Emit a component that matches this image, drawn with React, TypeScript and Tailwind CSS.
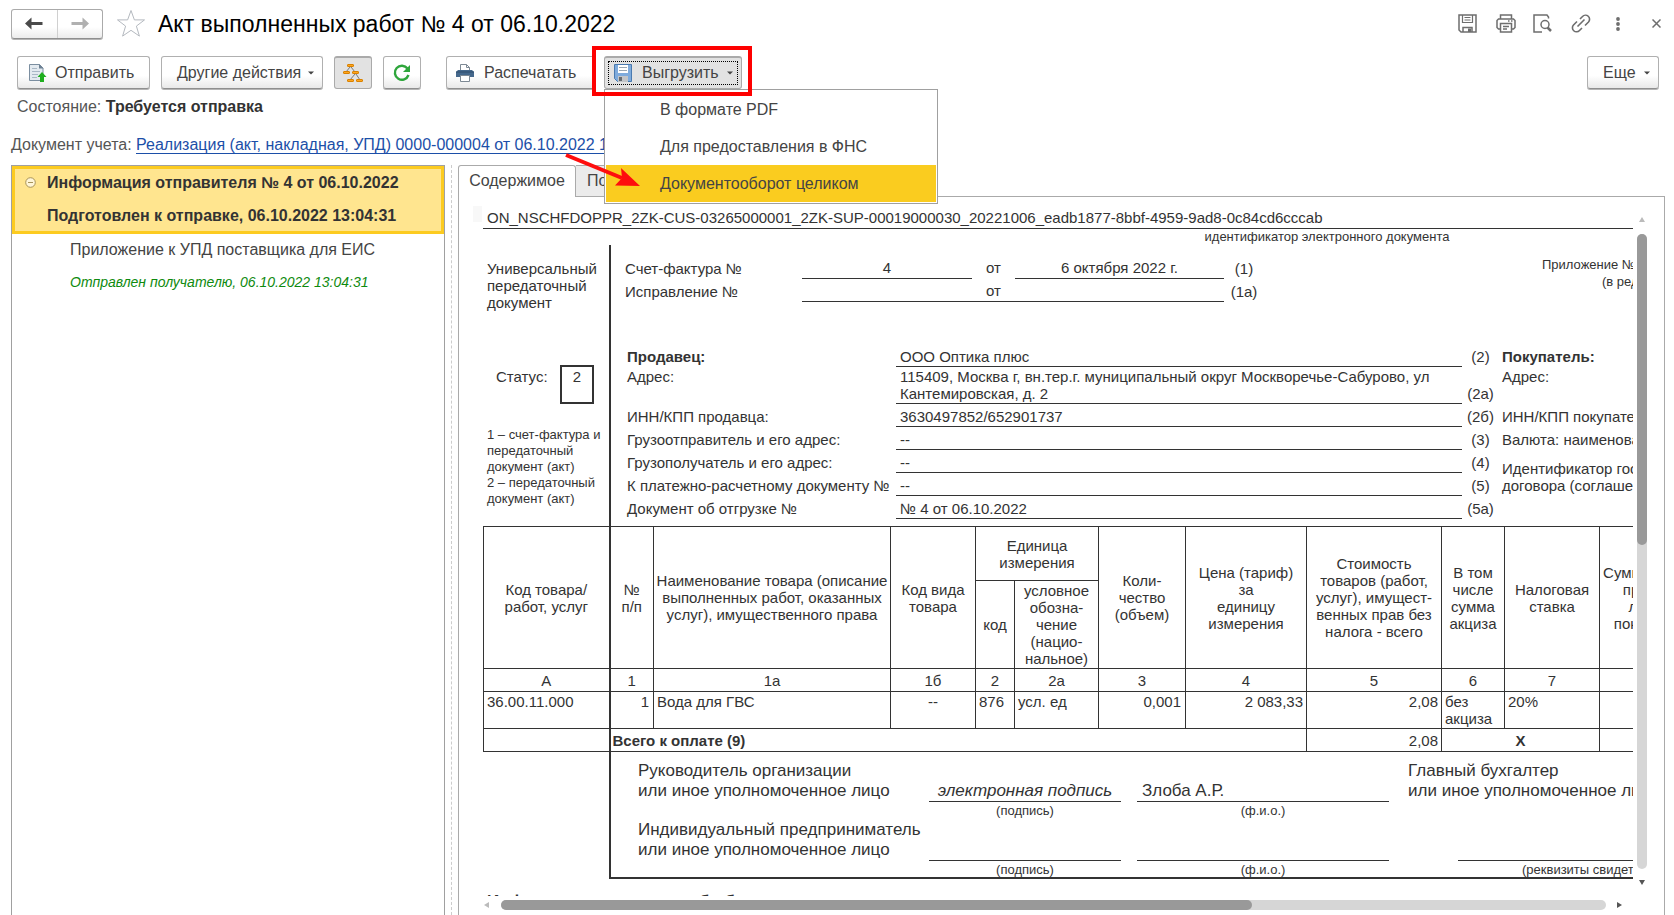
import { useState } from 'react';

const frame = 'border-[#333]';

const printRows = [
  { label: 'ИНН/КПП продавца:', value: '3630497852/652901737', num: '(2б)', buyer: 'ИНН/КПП покупателя:' },
  { label: 'Грузоотправитель и его адрес:', value: '--', num: '(3)', buyer: 'Валюта: наименование, код' },
];

const tailRows = [
  { label: 'Грузополучатель и его адрес:', value: '--', num: '(4)' },
  { label: 'К платежно-расчетному документу №', value: '--', num: '(5)' },
  { label: 'Документ об отгрузке №', value: '№ 4 от 06.10.2022', num: '(5а)' },
];

const columns = [126, 44, 237, 85, 39, 84, 87, 121, 135, 63, 95, 110];

const buttonBase =
  'flex h-[33px] shrink-0 items-center rounded-[3px] border border-[#b0b0b0] border-b-[#8f8f8f] bg-linear-to-b from-white from-60% to-[#e9e9e9] text-[16px] text-[#444] shadow-[0_1px_0_#b5b5b5]';

function Caret() {
  return (
    <svg width="6" height="4" viewBox="0 0 6 4" aria-hidden="true">
      <path d="M0 0.5h6L3 3.5z" fill="#444" />
    </svg>
  );
}

function SendIcon() {
  return (
    <svg width="19" height="20" viewBox="0 0 19 20" aria-hidden="true">
      <path d="M1.5 1.5h10l3.5 3.5v12.500H1.500z" fill="#e3eaf0" stroke="#7b8ea0" />
      <path d="M11 1l4.500 4.500H11z" fill="#6c8093" />
      <path d="M4 5.500h5M4 8.500h8M4 11.500h6M4 14.500h5" stroke="#a9b8c6" />
      <path d="M14 9l4.500 5H16v5h-4v-5H9.500z" fill="#1fae1f" />
    </svg>
  );
}

function TreeIcon() {
  return (
    <svg width="20" height="19" viewBox="0 0 20 19" aria-hidden="true">
      <path d="M7 3L3 8M8 3l4 5M12 10l-5 6M13 10l4 6" stroke="#7a7a7a" fill="none" />
      <g fill="#ffa51f" stroke="#d98200">
        <rect x="4.500" y="0.500" width="6" height="2" rx="0.500" />
        <rect x="0.500" y="7.500" width="6" height="2" rx="0.500" />
        <rect x="9.500" y="7.500" width="6" height="2" rx="0.500" />
        <rect x="4.500" y="15.500" width="6" height="2" rx="0.500" />
        <rect x="13.500" y="15.500" width="6" height="2" rx="0.500" />
      </g>
    </svg>
  );
}

function RefreshIcon() {
  return (
    <svg width="18" height="18" viewBox="0 0 18 18" aria-hidden="true">
      <path d="M14.500 4.500A7 7 0 1 0 15.500 11" fill="none" stroke="#2fa63c" strokeWidth="2.400" />
      <path d="M17 1v7h-7z" fill="#2fa63c" />
    </svg>
  );
}

function PrinterIcon() {
  return (
    <svg width="18" height="18" viewBox="0 0 18 18" aria-hidden="true">
      <path d="M4.500 7V0.500h6l3 3V7" fill="#fff" stroke="#7d8994" />
      <path d="M10.500 0.500v3h3" fill="none" stroke="#7d8994" />
      <path d="M2 6h14l2 2v5H0V8z" fill="#45688c" />
      <path d="M0 8h18" stroke="#2e4d6d" />
      <path d="M4.500 11.500h9v6h-9z" fill="#fff" stroke="#7d8994" />
    </svg>
  );
}

function DisketteIcon() {
  return (
    <svg width="18" height="18" viewBox="0 0 18 18" aria-hidden="true">
      <path d="M0.500 0.500h17v17h-14l-3-3z" fill="#7fabdc" stroke="#4a7ab0" />
      <path d="M4 1h10v8H4z" fill="#fff" />
      <path d="M5 3.500h8M5 6.500h8" stroke="#9aa7b3" />
      <path d="M4 12h10v6H4z" fill="#c3c5c8" />
      <path d="M5 13h3v4H5z" fill="#666c72" />
    </svg>
  );
}

function WindowIcons() {
  return (
    <div className="flex items-center text-[#6e6e6e]">
      <button type="button" aria-label="Сохранить" className="mr-[19px]">
        <svg width="19" height="19" viewBox="0 0 19 19" fill="none" stroke="currentColor" strokeWidth="1.500">
          <path d="M1 1h17v17H3l-2-2z" />
          <path d="M4.500 1v7.500h10V1M6.500 3.500h6M6.500 6h6" strokeWidth="1.200" />
          <path d="M5 18v-4.500h9V18" />
          <path d="M10 14.500h3V18h-3z" fill="currentColor" stroke="none" />
        </svg>
      </button>
      <button type="button" aria-label="Печать" className="mr-[17px]">
        <svg width="20" height="19" viewBox="0 0 20 19" fill="none" stroke="currentColor" strokeWidth="1.500">
          <path d="M4.500 5V1h11v4" />
          <path d="M4.500 15H2.500l-1.500-1.500v-7L2.500 5h15L19 6.500v7L17.500 15h-2" />
          <path d="M4.500 9.500h11V18h-11zM7 12.500h6M7 15h4" />
          <path d="M12 7h1.500M15 7h1.500" />
        </svg>
      </button>
      <button type="button" aria-label="Просмотр" className="mr-[19px]">
        <svg width="19" height="19" viewBox="0 0 19 19" fill="none" stroke="currentColor" strokeWidth="1.500">
          <path d="M15.500 4.500V3L14 1H1v17h8" />
          <circle cx="12" cy="10.500" r="4" />
          <path d="M14.500 13.500l3.500 3.500" strokeWidth="2.500" />
        </svg>
      </button>
      <button type="button" aria-label="Ссылка" className="mr-[25px]">
        <svg width="20" height="19" viewBox="0 0 20 19" fill="none" stroke="currentColor" strokeWidth="1.600">
          <path d="M9 5l2.500-2.500a4 4 0 0 1 6 5.500L14 11.500M11 14l-2.500 2.500a4 4 0 0 1-6-5.500L6 7.500M6.500 12.500l7-7" />
        </svg>
      </button>
      <button type="button" aria-label="Меню" className="mr-[32px]">
        <svg width="4" height="14" viewBox="0 0 4 14" fill="currentColor">
          <circle cx="2" cy="2" r="1.900" />
          <circle cx="2" cy="7" r="1.900" />
          <circle cx="2" cy="12" r="1.900" />
        </svg>
      </button>
      <button type="button" aria-label="Закрыть">
        <svg width="9" height="9" viewBox="0 0 9 9" stroke="currentColor" strokeWidth="1.500">
          <path d="M0.500 0.500l8 8M8.500 0.500l-8 8" />
        </svg>
      </button>
    </div>
  );
}

function Header() {
  return (
    <header className="flex h-[47px] items-center pr-[13px] pl-[11px]">
      <div className="flex h-[30px] w-[92px] rounded-[3px] border border-[#aaa] border-b-[#8f8f8f] bg-linear-to-b from-white from-60% to-[#ececec] shadow-[0_1px_0_#b5b5b5]">
        <button type="button" aria-label="Назад" className="flex flex-1 items-center justify-center border-r border-[#d0d0d0]">
          <svg width="18" height="13" viewBox="0 0 18 13">
            <path d="M6.500 0.500v12L0 6.500zM5 5h12.500v3H5z" fill="#4a4a4a" />
          </svg>
        </button>
        <button type="button" aria-label="Вперед" className="flex flex-1 items-center justify-center">
          <svg width="18" height="13" viewBox="0 0 18 13">
            <path d="M11.500 0.500v12l6.500-6zM13 5H0.500v3H13z" fill="#b0b0b0" />
          </svg>
        </button>
      </div>
      <button type="button" aria-label="Избранное" className="ml-[13px]">
        <svg width="30" height="29" viewBox="0 0 30 29" fill="#fff" stroke="#b4b9bf">
          <path d="M15 1.500l3.400 9.400h10.100l-8.100 6.200 3 10L15 21.300l-8.400 5.800 3-10-8.100-6.200h10.100z" />
        </svg>
      </button>
      <h1 className="ml-[12px] flex-1 text-[23px] leading-[30px] text-black">Акт выполненных работ № 4 от 06.10.2022</h1>
      <WindowIcons />
    </header>
  );
}

function ExportMenu() {
  const [active, setActive] = useState('Документооборот целиком');
  const items = ['В формате PDF', 'Для предоставления в ФНС', 'Документооборот целиком'];

  return (
    <div className="relative ml-[8px]">
      <button
        type="button"
        aria-haspopup="menu"
        className="flex h-[33px] w-[138px] items-center rounded-[3px] border border-t-2 border-[#aaa] bg-[#e2e2e2] p-[3px] text-[16px] text-[#444]"
      >
        <span className="flex h-full w-full items-center border border-dotted border-black pl-[5px]">
          <DisketteIcon />
          <span className="ml-[10px] flex-1 text-left">Выгрузить</span>
          <span className="mr-[4px]"><Caret /></span>
        </span>
      </button>
      <div role="menu" className="absolute top-[33px] left-0 z-10 flex w-[334px] flex-col border border-[#a0a0a0] bg-white p-px">
        {items.map((item) => (
          <button
            key={item}
            type="button"
            role="menuitem"
            onMouseEnter={() => setActive(item)}
            className={`h-[37px] pl-[54px] text-left text-[16px] text-[#444] ${item === active ? 'bg-[#facc1f]' : 'bg-white'}`}
          >
            {item}
          </button>
        ))}
      </div>
      <div className="pointer-events-none absolute -top-[10px] -left-[12px] z-20 h-[50px] w-[160px] border-4 border-[#fe0000]" />
      <svg className="pointer-events-none absolute top-[96px] -left-[40px] z-20" width="78" height="38" viewBox="0 0 78 38" aria-hidden="true">
        <path d="M2 3L58 26" stroke="#fe0d0d" strokeWidth="4" />
        <path d="M76 34L51 33.500l7-7.500-1-10z" fill="#fe0d0d" />
      </svg>
    </div>
  );
}

function Toolbar() {
  return (
    <div className="flex items-center pt-[9px] pr-[15px] pl-[17px]">
      <button type="button" className={`${buttonBase} w-[133px] pl-[10px]`}>
        <SendIcon />
        <span className="ml-[8px]">Отправить</span>
      </button>
      <button type="button" className={`${buttonBase} ml-[11px] w-[162px] pl-[15px]`}>
        Другие действия
        <span className="ml-[7px]"><Caret /></span>
      </button>
      <button
        type="button"
        aria-label="Структура"
        className="ml-[11px] flex h-[33px] w-[38px] items-center justify-center rounded-[3px] border border-t-2 border-[#aaa] bg-[#e2e2e2]"
      >
        <TreeIcon />
      </button>
      <button type="button" aria-label="Обновить" className={`${buttonBase} ml-[11px] w-[38px] justify-center`}>
        <RefreshIcon />
      </button>
      <button type="button" className={`${buttonBase} ml-[25px] w-[150px] pl-[9px]`}>
        <PrinterIcon />
        <span className="ml-[10px]">Распечатать</span>
      </button>
      <ExportMenu />
      <button type="button" className={`${buttonBase} ml-auto w-[72px] pl-[15px]`}>
        Еще
        <span className="ml-[8px]"><Caret /></span>
      </button>
    </div>
  );
}

function FlowTree() {
  return (
    <aside className="w-[434px] shrink-0 border border-b-0 border-[#a0a0a0] bg-white">
      <div className="border-[3px] border-[#fccb20] bg-[#ffe58f] pl-[10px] text-[16px] font-bold text-[#333]">
        <div className="flex h-[27px] items-center">
          <button type="button" aria-label="Свернуть">
            <svg width="11" height="11" viewBox="0 0 11 11" fill="#fff6d8" stroke="#a8945a">
              <circle cx="5.500" cy="5.500" r="4.800" />
              <path d="M3 5.500h5" />
            </svg>
          </button>
          <span className="ml-[11px]">Информация отправителя № 4 от 06.10.2022</span>
        </div>
        <div className="flex h-[35px] items-center pt-[5px] pl-[22px]">Подготовлен к отправке, 06.10.2022 13:04:31</div>
      </div>
      <div className="pl-[58px]">
        <div className="flex h-[32px] items-center text-[16px] text-[#444]">Приложение к УПД поставщика для ЕИС</div>
        <div className="flex h-[32px] items-center text-[14px] text-[#0e8a0e] italic">Отправлен получателю, 06.10.2022 13:04:31</div>
      </div>
    </aside>
  );
}

function DocumentHead() {
  return (
    <div className="flex">
      <div className="w-[126px] shrink-0 pl-[4px]">
        <p className="mt-[15px] leading-[17px]">Универсальный<br />передаточный<br />документ</p>
        <div className="mt-[54px] ml-[9px] flex">
          <span className="mt-[3px] w-[64px] leading-[17px]">Статус:</span>
          <span className={`h-[39px] w-[34px] border-2 ${frame} pt-px text-center leading-[17px]`}>2</span>
        </div>
        <p className="mt-[23px] text-[13px] leading-[16px]">
          1 – счет-фактура и<br />передаточный<br />документ (акт)<br />2 – передаточный<br />документ (акт)
        </p>
      </div>
      <div className={`flex-1 border-l-2 ${frame} pb-[7px] pl-[14px]`}>
        <div className="mt-[11px] flex">
          <div className="w-[908px] shrink-0">
            {[
              { label: 'Счет-фактура №', no: '4', date: '6 октября 2022 г.', mark: '(1)', line: '' },
              { label: 'Исправление №', no: '', date: '', mark: '(1а)', line: 'border-b' },
            ].map((row) => (
              <div key={row.mark} className="flex h-[23px] items-end leading-[21px]">
                <span className="w-[177px]">{row.label}</span>
                <span className={`h-[22px] w-[170px] border-b ${frame} text-center`}>{row.no}</span>
                <span className={`h-[22px] w-[43px] ${row.line} ${frame} text-center`}>от</span>
                <span className={`h-[22px] w-[209px] border-b ${frame} text-center`}>{row.date}</span>
                <span className="w-[40px] text-center">{row.mark}</span>
              </div>
            ))}
          </div>
          <p className="w-[300px] text-[13px] leading-[17px] whitespace-nowrap">
            <span className="block pl-[9px]">Приложение № 1 к постановлению</span>
            <span className="block pl-[69px]">(в редакции постановления)</span>
          </p>
        </div>
        <div className="mt-[42px] flex pl-[2px]">
          <div className="w-[875px] shrink-0 leading-[17px]">
            <div className="flex h-[23px] items-end">
              <b className="w-[269px] pb-[2px]">Продавец:</b>
              <span className={`w-[566px] border-b ${frame} pb-px pl-[4px]`}>ООО Оптика плюс</span>
              <span className="w-[37px] pb-[2px] text-center">(2)</span>
            </div>
            <div className="flex h-[37px] items-end">
              <span className="w-[269px] self-start pt-px">Адрес:</span>
              <span className={`w-[566px] border-b ${frame} pb-px pl-[4px]`}>
                115409, Москва г, вн.тер.г. муниципальный округ Москворечье-Сабурово, ул<br />Кантемировская, д. 2
              </span>
              <span className="w-[37px] pb-[2px] text-center">(2а)</span>
            </div>
            {[...printRows, ...tailRows].map((row) => (
              <div key={row.num} className="flex h-[23px] items-end">
                <span className="w-[269px] pb-[2px] whitespace-nowrap">{row.label}</span>
                <span className={`w-[566px] border-b ${frame} pb-px pl-[4px]`}>{row.value}</span>
                <span className="w-[37px] pb-[2px] text-center">{row.num}</span>
              </div>
            ))}
          </div>
          <div className="leading-[17px] whitespace-nowrap">
            <b className="flex h-[23px] items-end pb-[2px]">Покупатель:</b>
            <span className="block h-[37px] pt-px">Адрес:</span>
            {printRows.map((row) => (
              <span key={row.num} className="flex h-[23px] items-end pb-[2px]">{row.buyer}</span>
            ))}
            <span className="flex h-[46px] items-end pb-[2px]">
              Идентификатор государственного контракта,<br />договора (соглашения)
            </span>
          </div>
        </div>
      </div>
    </div>
  );
}

function GoodsTable() {
  const thick = 'border-l-2';
  const cell = `border ${frame}`;

  return (
    <table className="w-[1226px] table-fixed border-collapse leading-[17px]">
      <colgroup>
        {columns.map((width, i) => (
          <col key={i} style={{ width }} />
        ))}
      </colgroup>
      <thead>
        <tr className="h-[54px]">
          <th rowSpan={2} className={`${cell} p-0 font-normal`}>Код товара/<br />работ, услуг</th>
          <th rowSpan={2} className={`${cell} ${thick} p-0 font-normal`}>№<br />п/п</th>
          <th rowSpan={2} className={`${cell} p-0 font-normal whitespace-nowrap`}>Наименование товара (описание<br />выполненных работ, оказанных<br />услуг), имущественного права</th>
          <th rowSpan={2} className={`${cell} p-0 font-normal`}>Код вида<br />товара</th>
          <th colSpan={2} className={`${cell} p-0 font-normal`}>Единица<br />измерения</th>
          <th rowSpan={2} className={`${cell} p-0 font-normal`}>Коли-<br />чество<br />(объем)</th>
          <th rowSpan={2} className={`${cell} p-0 font-normal`}>Цена (тариф)<br />за<br />единицу<br />измерения</th>
          <th rowSpan={2} className={`${cell} p-0 font-normal`}>Стоимость<br />товаров (работ,<br />услуг), имущест-<br />венных прав без<br />налога - всего</th>
          <th rowSpan={2} className={`${cell} p-0 font-normal`}>В том<br />числе<br />сумма<br />акциза</th>
          <th rowSpan={2} className={`${cell} p-0 font-normal`}>Налоговая<br />ставка</th>
          <th rowSpan={2} className={`${cell} p-0 font-normal whitespace-nowrap`}>Сумма налога,<br />предъяв-<br />ляемая<br />покупателю</th>
        </tr>
        <tr className="h-[88px]">
          <th className={`${cell} p-0 font-normal`}>код</th>
          <th className={`${cell} p-0 font-normal whitespace-nowrap`}>условное<br />обозна-<br />чение<br />(нацио-<br />нальное)</th>
        </tr>
        <tr className="h-[23px]">
          {['А', '1', '1а', '1б', '2', '2а', '3', '4', '5', '6', '7', '8'].map((mark) => (
            <th key={mark} className={`${cell} ${mark === '1' ? thick : ''} p-0 font-normal`}>{mark}</th>
          ))}
        </tr>
      </thead>
      <tbody>
        <tr className="h-[37px] align-top">
          <td className={`${cell} pt-px pl-[3px]`}>36.00.11.000</td>
          <td className={`${cell} ${thick} pt-px pr-[4px] text-right`}>1</td>
          <td className={`${cell} pt-px pl-[3px]`}>Вода для ГВС</td>
          <td className={`${cell} pt-px text-center`}>--</td>
          <td className={`${cell} pt-px pl-[3px]`}>876</td>
          <td className={`${cell} pt-px pl-[3px]`}>усл. ед</td>
          <td className={`${cell} pt-px pr-[4px] text-right`}>0,001</td>
          <td className={`${cell} pt-px pr-[3px] text-right`}>2 083,33</td>
          <td className={`${cell} pt-px pr-[3px] text-right`}>2,08</td>
          <td className={`${cell} pt-px pl-[3px]`}>без<br />акциза</td>
          <td className={`${cell} pt-px pl-[3px]`}>20%</td>
          <td className={cell}></td>
        </tr>
        <tr className="h-[23px]">
          <td className={cell}></td>
          <td colSpan={7} className={`${cell} ${thick} pl-[2px] font-bold`}>Всего к оплате (9)</td>
          <td className={`${cell} pr-[3px] text-right`}>2,08</td>
          <td colSpan={2} className={`${cell} text-center font-bold`}>Х</td>
          <td className={cell}></td>
        </tr>
      </tbody>
    </table>
  );
}

function Signatures() {
  return (
    <div className={`ml-[126px] h-[127px] border-b-2 border-l-2 ${frame} pl-[27px]`}>
      {[
        { who: 'Руководитель организации', sign: 'электронная подпись', name: 'Злоба А.Р.' },
        { who: 'Индивидуальный предприниматель', sign: '', name: '' },
      ].map((row, i) => (
        <div key={row.who} className="flex h-[59px] pt-[9px] text-[17px] leading-[20px] whitespace-nowrap">
          <p className="w-[291px] shrink-0">{row.who}<br />или иное уполномоченное лицо</p>
          <div className="mr-[16px] w-[192px] shrink-0 pt-[20px] text-center">
            <p className={`h-[21px] border-b ${frame} italic`}>{row.sign}</p>
            <p className="text-[13px] leading-[18px]">(подпись)</p>
          </div>
          <div className="w-[252px] shrink-0 pt-[20px] text-center">
            <p className={`h-[21px] border-b ${frame} pl-[5px] text-left`}>{row.name}</p>
            <p className="text-[13px] leading-[18px]">(ф.и.о.)</p>
          </div>
          {i === 0 ? (
            <p className="ml-[19px]">Главный бухгалтер<br />или иное уполномоченное лицо</p>
          ) : (
            <div className="ml-[69px] w-[340px] shrink-0 pt-[20px]">
              <p className={`h-[21px] border-b ${frame}`}></p>
              <p className="pl-[64px] text-[13px] leading-[18px]">(реквизиты свидетельства)</p>
            </div>
          )}
        </div>
      ))}
    </div>
  );
}

function DocumentView() {
  return (
    <div className="flex min-h-0 flex-1 flex-col pt-[9px] pr-[17px] pb-[5px] pl-[14px]">
      <div className="flex min-h-0 flex-1">
        <div className="min-w-0 flex-1 overflow-hidden">
          <div className="flex w-[1700px] text-[15px] text-[#333]">
            <div className="mr-px h-[16px] w-[9px] bg-[#f8f8f8]" />
            <div className="flex-1">
              <div className={`border-b ${frame} pt-[2px] pl-[4px] leading-[20px]`}>
                ON_NSCHFDOPPR_2ZK-CUS-03265000001_2ZK-SUP-00019000030_20221006_eadb1877-8bbf-4959-9ad8-0c84cd6cccab
              </div>
              <p className="pr-[2px] text-center text-[13px] leading-[16px]">идентификатор электронного документа</p>
              <DocumentHead />
              <GoodsTable />
              <Signatures />
              <h2 className="mt-[13px] pl-[4px] text-[17px] leading-[20px] font-bold whitespace-nowrap">
                Информация продавца об обстоятельствах закупки для государственных и муниципальных нужд
              </h2>
            </div>
          </div>
        </div>
        <div className="ml-[4px] flex w-[10px] shrink-0 flex-col items-center">
          <svg className="mt-[11px]" width="6" height="6" viewBox="0 0 6 6"><path d="M3 0l3 5H0z" fill="#bbb" /></svg>
          <div className="mt-[11px] w-full flex-1 rounded-full bg-[#d6d6d6]">
            <div className="h-[49%] rounded-full bg-[#999]" />
          </div>
          <svg className="mt-[11px] mb-[10px]" width="6" height="6" viewBox="0 0 6 6"><path d="M3 5L0 0h6z" fill="#555" /></svg>
        </div>
      </div>
      <div className="mt-[4px] mr-[24px] ml-[11px] flex h-[10px] items-center">
        <svg width="6" height="6" viewBox="0 0 6 6"><path d="M0 3l5-3v6z" fill="#bbb" /></svg>
        <div className="ml-[11px] h-full flex-1 rounded-full bg-[#d6d6d6]">
          <div className="h-full w-[68%] rounded-full bg-[#999]" />
        </div>
        <svg className="ml-[11px]" width="6" height="6" viewBox="0 0 6 6"><path d="M5 3L0 0v6z" fill="#555" /></svg>
      </div>
    </div>
  );
}

export default function App() {
  return (
    <div className="flex h-screen flex-col overflow-hidden bg-white font-['Liberation_Sans',Arial,sans-serif]">
      <Header />
      <Toolbar />
      <p className="mt-[8px] pl-[17px] text-[16px] leading-[20px] text-[#555]">
        Состояние: <b className="text-[#333]">Требуется отправка</b>
      </p>
      <p className="mt-[18px] pl-[11px] text-[16px] leading-[20px] text-[#555]">
        Документ учета:{' '}
        <a href="#document" className="border-b border-[#1c4fa8] text-[#1c4fa8]">
          Реализация (акт, накладная, УПД) 0000-000004 от 06.10.2022 13:04:31
        </a>
      </p>
      <main className="mt-[10px] flex min-h-0 flex-1 pr-[9px] pl-[11px]">
        <FlowTree />
        <div className="mr-[6px] ml-[6px] w-px border-l border-dashed border-[#ccc]" />
        <section className="flex min-w-0 flex-1 flex-col">
          <div role="tablist" className="flex h-[32px] text-[16px] text-[#444]">
            <button type="button" role="tab" aria-selected="true" className="w-[118px] rounded-t-[3px] border border-b-0 border-[#aaa] bg-white pb-[2px]">
              Содержимое
            </button>
            <button type="button" role="tab" aria-selected="false" className="w-[118px] border border-l-0 border-[#aaa] bg-[#ebebeb] pb-px pl-[11px] text-left">
              Подписи
            </button>
            <div className="flex-1 border-b border-[#aaa]" />
          </div>
          <div className="flex min-h-0 flex-1 flex-col border-x border-[#aaa]">
            <DocumentView />
          </div>
        </section>
      </main>
    </div>
  );
}
